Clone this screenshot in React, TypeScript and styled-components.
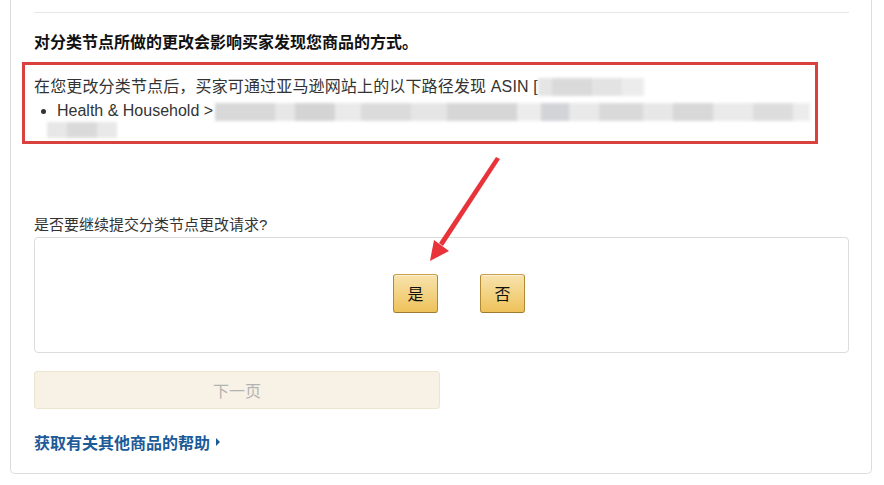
import React from 'react';
import styled, { createGlobalStyle } from 'styled-components';

const GlobalStyle = createGlobalStyle`
  html, body {
    margin: 0;
    padding: 0;
    background: #fff;
  }
  body {
    font-family: "Liberation Sans", "Noto Sans CJK SC", Arial, sans-serif;
    color: #333;
  }
`;

const blurSegments = {
  asin: [
    { w: 14, c: '#e4e4e4' },
    { w: 40, c: '#d9d9d9' },
    { w: 30, c: '#e2e2e2' },
    { w: 22, c: '#ececec' },
  ],
  path: [
    { w: 60, c: '#d6d6d6' },
    { w: 20, c: '#e6e6e6' },
    { w: 40, c: '#d2d2d2' },
    { w: 26, c: '#e9e9e9' },
    { w: 50, c: '#dadada' },
    { w: 36, c: '#e4e4e4' },
    { w: 70, c: '#d4d4d4' },
    { w: 24, c: '#ececec' },
    { w: 28, c: '#d0d2d6' },
    { w: 30, c: '#e8e8e8' },
    { w: 44, c: '#d8d8d8' },
    { w: 30, c: '#e6e6e6' },
    { w: 40, c: '#d6d6d6' },
    { w: 40, c: '#e9e9e9' },
    { w: 40, c: '#dcdcdc' },
    { w: 17, c: '#ececec' },
  ],
  tail: [
    { w: 20, c: '#e6e6e6' },
    { w: 30, c: '#d9d9d9' },
    { w: 20, c: '#e8e8e8' },
  ],
};

function Blurred({ parts, height }: { parts: { w: number; c: string }[]; height: number }) {
  return (
    <BlurRow $height={height}>
      {parts.map((p, i) => (
        <BlurPiece key={i} style={{ width: p.w, background: p.c }} />
      ))}
    </BlurRow>
  );
}

function Arrow() {
  return (
    <ArrowSvg width="884" height="485" viewBox="0 0 884 485">
      <polygon points="496,157 500,159 443,246 439,243" fill="#e8333a" />
      <polygon points="430,261 434,240 449,251" fill="#e8333a" />
    </ArrowSvg>
  );
}

export default function App() {
  return (
    <Page>
      <GlobalStyle />
      <Card>
        <Divider />
        <Heading>对分类节点所做的更改会影响买家发现您商品的方式。</Heading>
        <Notice>
          <NoticeLine>
            在您更改分类节点后，买家可通过亚马逊网站上的以下路径发现 ASIN [
            <Blurred parts={blurSegments.asin} height={18} />
          </NoticeLine>
          <PathList>
            <PathItem>
              Health &amp; Household &gt;
              <Blurred parts={blurSegments.path} height={18} />
            </PathItem>
          </PathList>
          <TailLine>
            <Blurred parts={blurSegments.tail} height={16} />
          </TailLine>
        </Notice>

        <Question>是否要继续提交分类节点更改请求?</Question>
        <ChoiceBox>
          <GoldButton>是</GoldButton>
          <GoldButton>否</GoldButton>
        </ChoiceBox>

        <NextButton disabled>下一页</NextButton>

        <HelpLink href="#">
          获取有关其他商品的帮助
          <Caret />
        </HelpLink>
      </Card>
      <Arrow />
    </Page>
  );
}

const Page = styled.div`
  position: relative;
  width: 884px;
  height: 485px;
  overflow: hidden;
  padding: 0 12px 0 10px;
  box-sizing: border-box;
`;

const Card = styled.div`
  box-sizing: border-box;
  width: 862px;
  padding: 12px 22px 20px 23px;
  border: 1px solid #dcdcdc;
  border-top: none;
  border-radius: 0 0 5px 5px;
  background: #fff;
`;

const Divider = styled.div`
  height: 1px;
  background: #e7e7e7;
`;

const Heading = styled.h3`
  margin: 19px 0 0;
  font-size: 16px;
  line-height: 22px;
  font-weight: 700;
  color: #111;
`;

const Notice = styled.div`
  box-sizing: border-box;
  width: 796px;
  margin: 8px 0 0 -12px;
  padding: 11px 9px 3px;
  border: 3px solid #d9413f;
  font-size: 16px;
`;

const NoticeLine = styled.div`
  display: flex;
  align-items: center;
  line-height: 22px;
  white-space: nowrap;
  letter-spacing: 0.15px;
`;

const PathList = styled.ul`
  margin: 3px 0 0;
  padding-left: 23px;
  list-style: disc;
`;

const PathItem = styled.li`
  line-height: 20px;
  white-space: nowrap;

  & > div {
    display: inline-flex;
    vertical-align: middle;
    margin-left: 2px;
  }
`;

const TailLine = styled.div`
  height: 17px;
  margin-left: 13px;
  display: flex;
  align-items: center;
`;

const BlurRow = styled.div<{ $height: number }>`
  display: inline-flex;
  height: ${({ $height }) => $height}px;
  filter: blur(1.6px);
  opacity: 0.95;
`;

const BlurPiece = styled.span`
  display: block;
  height: 100%;
`;

const Question = styled.div`
  margin-top: 71px;
  font-size: 15px;
  line-height: 20px;
  color: #333;
`;

const ChoiceBox = styled.div`
  box-sizing: border-box;
  height: 116px;
  margin-top: 2px;
  border: 1px solid #dcdcdc;
  border-radius: 4px;
  display: flex;
  align-items: center;
  padding: 0 0 4px 358px;
  gap: 42px;
`;

const GoldButton = styled.button`
  width: 45px;
  height: 39px;
  padding: 0;
  border: 1px solid;
  border-color: #c8a04a #b08a35 #9c7a2e;
  border-radius: 3px;
  background: linear-gradient(to bottom, #f8e3ad, #eec25a);
  box-shadow: inset 0 1px 0 rgba(255, 255, 255, 0.5);
  font-family: "Noto Sans CJK SC", sans-serif;
  font-size: 16px;
  color: #111;
  cursor: pointer;
`;

const NextButton = styled.button`
  display: block;
  box-sizing: border-box;
  width: 406px;
  height: 38px;
  margin-top: 18px;
  border: 1px solid #ece5d2;
  border-radius: 3px;
  background: #f7f2e5;
  font-family: "Noto Sans CJK SC", sans-serif;
  font-size: 16px;
  color: #b3b3b3;
`;

const HelpLink = styled.a`
  display: inline-flex;
  align-items: center;
  margin-top: 23px;
  font-family: "Noto Sans CJK SC", sans-serif;
  font-size: 16px;
  line-height: 20px;
  font-weight: 700;
  color: #1c5a98;
  text-decoration: none;
`;

const Caret = styled.span`
  width: 0;
  height: 0;
  margin-left: 6px;
  border-top: 4px solid transparent;
  border-bottom: 4px solid transparent;
  border-left: 4px solid #1c5a98;
`;

const ArrowSvg = styled.svg`
  position: absolute;
  top: 0;
  left: 0;
  pointer-events: none;
`;
